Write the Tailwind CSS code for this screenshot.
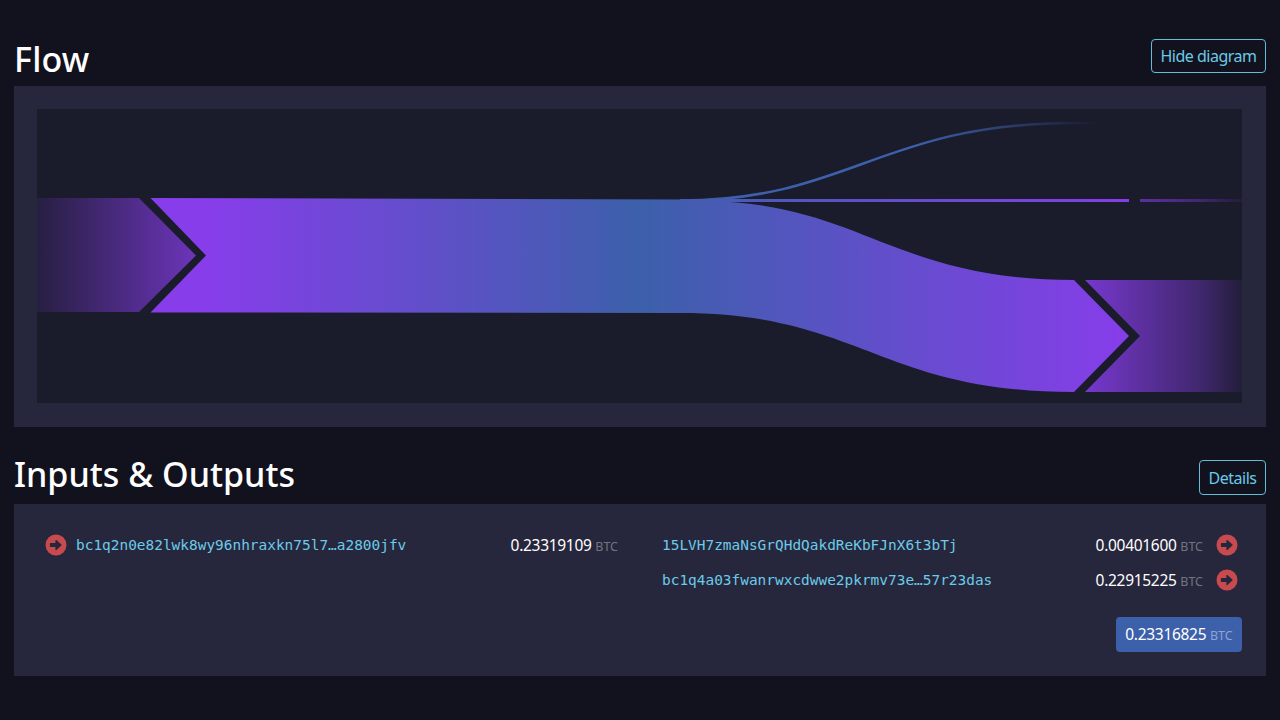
<!DOCTYPE html>
<html lang="en">
<head>
    <meta charset="UTF-8">
    <title>Flow</title>
    <script src="https://cdn.jsdelivr.net/npm/@tailwindcss/browser@4"></script>
</head>
<body class="bg-[#11121d] font-['Noto_Sans',sans-serif] text-white">
    <div class="h-[720px] w-[1280px] overflow-hidden px-[14px] pt-[39px]">
        <!-- Flow -->
        <div class="flex h-[47px] items-start justify-between">
            <h2 class="text-[34px] leading-[40px] font-medium tracking-[0.2px]">Flow</h2>
            <button class="h-[34px] w-[115px] rounded-[4px] border-[1.5px] border-[#62bdd6] text-[16px] tracking-[-0.5px] text-[#6cc9e8]">Hide diagram</button>
        </div>
        <div class="h-[341px] bg-[#26273d] p-[23px]">
            <svg class="block bg-[#1a1b2b]" width="1205" height="294" viewBox="37 109 1205 294">
                <defs>
                    <linearGradient id="in-fade" gradientUnits="userSpaceOnUse" x1="37" y1="0" x2="197" y2="0">
                        <stop offset="0" stop-color="#873dea" stop-opacity="0.12"/>
                        <stop offset="1" stop-color="#873dea" stop-opacity="0.75"/>
                    </linearGradient>
                    <linearGradient id="out-fade" gradientUnits="userSpaceOnUse" x1="1085" y1="0" x2="1242" y2="0">
                        <stop offset="0" stop-color="#873dea" stop-opacity="0.85"/>
                        <stop offset="0.73" stop-color="#873dea" stop-opacity="0.36"/>
                        <stop offset="1" stop-color="#873dea" stop-opacity="0.08"/>
                    </linearGradient>
                    <linearGradient id="main-flow" gradientUnits="userSpaceOnUse" x1="206" y1="0" x2="1130" y2="0">
                        <stop offset="0" stop-color="#873dea"/>
                        <stop offset="0.47" stop-color="#3c60aa"/>
                        <stop offset="1" stop-color="#873dea"/>
                    </linearGradient>
                    <linearGradient id="top-flow" gradientUnits="userSpaceOnUse" x1="640" y1="0" x2="1100" y2="0">
                        <stop offset="0" stop-color="#3c60aa"/>
                        <stop offset="0.6" stop-color="#3c60aa"/>
                        <stop offset="1" stop-color="#3c60aa" stop-opacity="0"/>
                    </linearGradient>
                </defs>
                <!-- input -->
                <path d="M37 198H139L196 255.5L139 312H37Z" fill="url(#in-fade)"/>
                <!-- main band -->
                <path d="M150.500 198L206 255.500L150.500 312.500L680 313C860 313 880 392 1074 392L1129 336L1074 280C890 280 860 201 700 201L690 199.500Z" fill="url(#main-flow)"/>
                <!-- thin outputs -->
                <path d="M680 200.500C850 200.500 880 123 1075 123L1130 123" fill="none" stroke="url(#top-flow)" stroke-width="2.500"/>
                <path d="M680 200.500H1129" fill="none" stroke="url(#main-flow)" stroke-width="3"/>
                <path d="M1140 200.500H1242" fill="none" stroke="url(#out-fade)" stroke-width="3"/>
                <!-- output -->
                <path d="M1085 280H1242V392H1085L1140 336Z" fill="url(#out-fade)"/>
            </svg>
        </div>

        <!-- Inputs & Outputs -->
        <div class="mt-[33px] flex h-[44px] items-start justify-between">
            <h2 class="text-[34px] leading-[28px] font-medium">Inputs &amp; Outputs</h2>
            <button class="h-[35px] w-[67px] rounded-[4px] border-[1.5px] border-[#62bdd6] text-[16px] tracking-[-0.5px] text-[#6cc9e8]">Details</button>
        </div>
        <div class="grid h-[172px] grid-cols-[573px_1fr] gap-x-[44px] bg-[#26273d] pt-[24px] pr-[24px] pl-[31px]">
            <div>
                <div class="flex h-[35px] items-center">
                    <svg class="mr-[9px] -mt-[1px] shrink-0" width="22" height="22" viewBox="0 0 22 22">
                        <circle cx="11" cy="11" r="10.500" fill="#c74a4f"/>
                        <path d="M5.500 9.500H11V6.500L16 11L11 15.500V12.500H5.500Z" fill="#26273d" stroke="#26273d" stroke-width="1.200" stroke-linejoin="round"/>
                    </svg>
                    <span class="font-['DejaVu_Sans_Mono',monospace] text-[14.440px] text-[#6ccbe8]">bc1q2n0e82lwk8wy96nhraxkn75l7…a2800jfv</span>
                    <span class="ml-auto text-[15.500px] tracking-[-0.3px]">0.23319109 <span class="text-[12.500px] tracking-normal text-[#73747f]">BTC</span></span>
                </div>
            </div>
            <div>
                <div class="flex h-[35px] items-center">
                    <span class="font-['DejaVu_Sans_Mono',monospace] text-[14.440px] text-[#6ccbe8]">15LVH7zmaNsGrQHdQakdReKbFJnX6t3bTj</span>
                    <span class="ml-auto text-[15.500px] tracking-[-0.3px]">0.00401600 <span class="text-[12.500px] tracking-normal text-[#73747f]">BTC</span></span>
                    <svg class="mr-[4px] ml-[13px] -mt-[1px] shrink-0" width="22" height="22" viewBox="0 0 22 22">
                        <circle cx="11" cy="11" r="10.500" fill="#c74a4f"/>
                        <path d="M5.500 9.500H11V6.500L16 11L11 15.500V12.500H5.500Z" fill="#26273d" stroke="#26273d" stroke-width="1.200" stroke-linejoin="round"/>
                    </svg>
                </div>
                <div class="flex h-[35px] items-center">
                    <span class="font-['DejaVu_Sans_Mono',monospace] text-[14.440px] text-[#6ccbe8]">bc1q4a03fwanrwxcdwwe2pkrmv73e…57r23das</span>
                    <span class="ml-auto text-[15.500px] tracking-[-0.3px]">0.22915225 <span class="text-[12.500px] tracking-normal text-[#73747f]">BTC</span></span>
                    <svg class="mr-[4px] ml-[13px] -mt-[1px] shrink-0" width="22" height="22" viewBox="0 0 22 22">
                        <circle cx="11" cy="11" r="10.500" fill="#c74a4f"/>
                        <path d="M5.500 9.500H11V6.500L16 11L11 15.500V12.500H5.500Z" fill="#26273d" stroke="#26273d" stroke-width="1.200" stroke-linejoin="round"/>
                    </svg>
                </div>
                <div class="mt-[19px] flex justify-end">
                    <div class="flex h-[35px] w-[126px] items-center justify-center rounded-[4px] bg-[#3d60ab]">
                        <span class="text-[15.500px] tracking-[-0.3px]">0.23316825 <span class="text-[12.500px] tracking-normal text-[#8ea3d4]">BTC</span></span>
                    </div>
                </div>
            </div>
        </div>
    </div>
</body>
</html>
